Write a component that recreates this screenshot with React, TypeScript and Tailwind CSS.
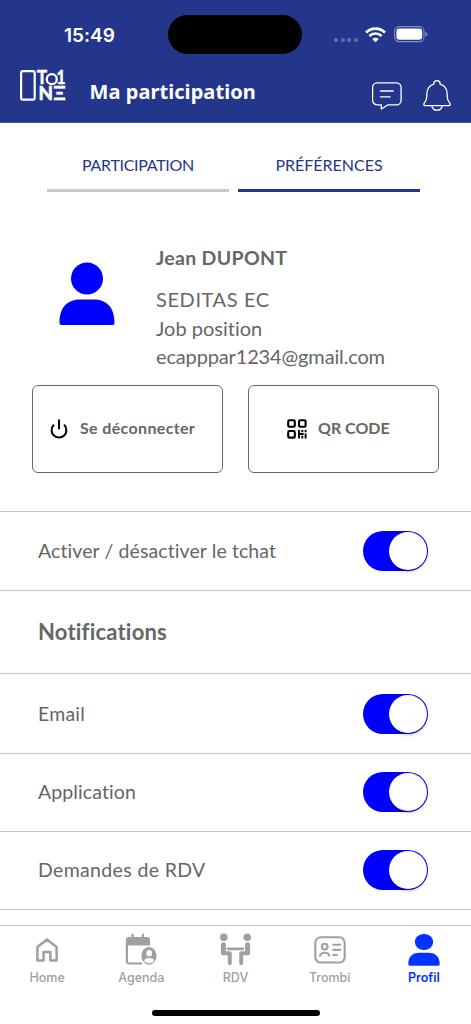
import { useState } from 'react';
import type { ReactNode } from 'react';

function Logo() {
  return (
    <svg width="54" height="48" viewBox="0 -8 54 48" fill="none" stroke="white">
      <rect x="1.1" y="1.1" width="13.6" height="28.6" rx="2" strokeWidth="2.2" />
      <g fill="white" stroke="white" strokeWidth="0.6" fontFamily="Lato, sans-serif" fontWeight="700">
        <text x="17" y="14.2" fontSize="18.5" textLength="10" lengthAdjust="spacingAndGlyphs">T</text>
        <text x="36.6" y="14.2" fontSize="18.5" textLength="9" lengthAdjust="spacingAndGlyphs">1</text>
        <text x="18.6" y="30.2" fontSize="18" textLength="14.5" lengthAdjust="spacingAndGlyphs">N</text>
        <text x="33.6" y="30.2" fontSize="18" textLength="12" lengthAdjust="spacingAndGlyphs">Ξ</text>
      </g>
      <circle cx="31.8" cy="9.2" r="5" strokeWidth="2.3" />
    </svg>
  );
}

function WifiIcon() {
  return (
    <svg width="21" height="16" viewBox="0 0 21 16" fill="none" stroke="white" strokeWidth="2.7">
      <path d="M1 5.5a13.5 13.5 0 0 1 19 0" />
      <path d="M4.4 9a8.7 8.7 0 0 1 12.2 0" />
      <path d="M10.5 15.2 7.3 12a4.6 4.6 0 0 1 6.4 0z" fill="white" stroke="none" />
    </svg>
  );
}

function BatteryIcon() {
  return (
    <svg width="34" height="17" viewBox="0 0 34 17" fill="none">
      <rect x="0.6" y="0.6" width="29.4" height="15" rx="4.6" stroke="#8792c2" strokeWidth="1.1" />
      <rect x="2.4" y="2.4" width="25.8" height="11.4" rx="3.2" fill="white" />
      <path d="M31.5 5.8q1.7.8 1.7 2.4t-1.7 2.4z" fill="#8792c2" />
    </svg>
  );
}

function MessageIcon() {
  return (
    <svg width="30" height="28" viewBox="0 0 30 28" fill="none" stroke="white" strokeWidth="1.3" strokeLinecap="round" strokeLinejoin="round">
      <path d="M5.2.8h19.3a4.6 4.6 0 0 1 4.6 4.6v12.8a4.6 4.6 0 0 1-4.6 4.6H16.2L9.3 27v-4.2H5.2a4.6 4.6 0 0 1-4.6-4.6V5.4A4.6 4.6 0 0 1 5.2.8z" />
      <path d="M8.4 9h12.8M8.4 14.8h9.8" />
    </svg>
  );
}

function BellIcon() {
  return (
    <svg width="28" height="32" viewBox="0 0 28 32" fill="none" stroke="white" strokeWidth="1.3" strokeLinejoin="round">
      <path d="M10.9 4.1V3.8a3.1 3.1 0 0 1 6.2 0v.3c4.6 1.5 7 5 7 9.6 0 4.5.4 6.5 2 8.4 1.7 2 1.6 3.5-.7 3.5H2.6c-2.3 0-2.4-1.5-.7-3.5 1.6-1.9 2-3.9 2-8.4 0-4.6 2.4-8.1 7-9.6z" />
      <path d="M8.9 25.8c.5 2.8 2.4 4.4 5.1 4.4s4.6-1.6 5.1-4.4" />
    </svg>
  );
}

function PersonIcon() {
  return (
    <svg width="56" height="64" viewBox="0 0 56 64" fill="#0000ff">
      <circle cx="28" cy="16.5" r="16" />
      <path d="M0.5 61c0-16 8-23.5 21-23.5h13c13 0 21 7.5 21 23.5a1.9 1.9 0 0 1-1.9 1.9H2.4A1.9 1.9 0 0 1 .5 61z" />
    </svg>
  );
}

function PowerIcon() {
  return (
    <svg width="18" height="20" viewBox="0 0 18 20" fill="none" stroke="black" strokeWidth="2" strokeLinecap="round">
      <path d="M9 1.2v8.3M3.5 6.2A7.4 7.4 0 1 0 14.5 6.2" />
    </svg>
  );
}

function QrIcon() {
  return (
    <svg width="20" height="20" viewBox="0 0 20 20" fill="none" stroke="black" strokeWidth="2.1">
      <rect x="1.2" y="1.2" width="6.6" height="6.6" rx="1.2" />
      <rect x="12" y="1.2" width="6.6" height="6.6" rx="1.2" />
      <rect x="1.2" y="12" width="6.6" height="6.6" rx="1.2" />
      <path d="M12 11v8.6M18.6 11v2.3M18.6 14.5v5.1M15.3 11v2.2M15.3 16.8v2.8M13 15h3.6" strokeWidth="1.9" />
    </svg>
  );
}

function HomeIcon() {
  return (
    <svg width="22" height="24" viewBox="0 0 22 24" fill="none" stroke="#a0a0a0" strokeWidth="2.5" strokeLinejoin="round">
      <path d="M1.4 8.9 11 1.6l9.6 7.3v13.5h-6.2V14H7.6v8.4H1.4z" />
    </svg>
  );
}

function AgendaIcon() {
  return (
    <svg width="32" height="33" viewBox="0 0 32 33" fill="#a0a0a0">
      <path d="M4 4h18a3 3 0 0 1 3 3v5.5H.8V7A3 3 0 0 1 4 4z" />
      <path d="M7.5.8v5M18 .8v5" stroke="#a0a0a0" strokeWidth="2.3" />
      <path d="M1.9 11v17a2.5 2.5 0 0 0 2.5 2.5H17" fill="none" stroke="#a0a0a0" strokeWidth="2.2" />
      <ellipse cx="24" cy="22.8" rx="8.5" ry="9.7" fill="white" />
      <ellipse cx="24" cy="22.8" rx="7.6" ry="8.9" />
      <ellipse cx="24.2" cy="20.2" rx="2.8" ry="3.2" fill="white" />
      <path d="M19.2 28.3c.2-2.2 2-3.3 4.9-3.3s4.7 1.1 4.9 3.3c-3 2.5-6.8 2.5-9.8 0z" fill="white" />
    </svg>
  );
}

function MeetingIcon() {
  return (
    <svg width="32" height="33" viewBox="1 0 32 33" fill="none" stroke="#a0a0a0" strokeLinecap="round" strokeLinejoin="round">
      <g fill="#a0a0a0" stroke="none">
        <circle cx="4.8" cy="4.2" r="3.8" />
        <circle cx="28.2" cy="4.2" r="3.8" />
      </g>
      <path d="M4.4 11.8v8M28.6 11.8v8" strokeWidth="5" />
      <path d="M4.4 20.3h6.400v10M28.600 20.300h-6.400v10" strokeWidth="3.900" />
      <path d="M9 15.8h15" strokeWidth="2.800" />
    </svg>
  );
}

function BadgeIcon() {
  return (
    <svg width="32" height="28" viewBox="0 0 32 28" fill="none" stroke="#a0a0a0" strokeWidth="2.1" strokeLinecap="round">
      <rect x="1.3" y="1.3" width="29.4" height="25.2" rx="5.5" />
      <circle cx="10.7" cy="10.6" r="2.9" />
      <path d="M6 19.7c.8-4 8.6-4 9.4 0M19.2 8.8h7M19.2 13.9h7M19.2 19h3.6" />
    </svg>
  );
}

function ProfileIcon() {
  return (
    <svg width="32" height="32" viewBox="0 0 32 32" fill="#0433ff">
      <ellipse cx="16" cy="8" rx="9.2" ry="8" />
      <path d="M.3 30.3c0-7.5 4-11.5 11-11.5h9.400c7 0 11 4 11 11.500a1.400 1.400 0 0 1-1.400 1.400H1.700a1.400 1.400 0 0 1-1.400-1.400z" />
    </svg>
  );
}

function SettingRow({ label, className }: { label: string; className: string }) {
  const [enabled, setEnabled] = useState(true);

  return (
    <div className={`flex shrink-0 items-center justify-between border-t border-[#c8c8c8] pr-[43px] pl-[38px] ${className}`}>
      <span className="text-[19.5px]">{label}</span>
      <button
        role="switch"
        aria-checked={enabled}
        aria-label={label}
        onClick={() => setEnabled(!enabled)}
        className={`flex h-10 w-[65px] items-center rounded-full p-px tracking-normal ${enabled ? 'justify-end bg-[#0000ff]' : 'justify-start bg-gray-300'}`}
      >
        <span className="size-[38px] rounded-full bg-white shadow-[0_2px_3px_rgba(0,0,0,0.25)]" />
      </button>
    </div>
  );
}

function NavItem({ label, icon, active = false }: { label: string; icon: ReactNode; active?: boolean }) {
  return (
    <a className={`flex flex-1 flex-col items-center font-['Inter',sans-serif] text-[12.5px] ${active ? 'font-semibold text-[#0433ff]' : 'font-medium text-[#a0a0a0]'}`}>
      <span className="flex h-[33px] items-center">{icon}</span>
      <span className="mt-1 leading-4">{label}</span>
    </a>
  );
}

export default function App() {
  return (
    <div className="flex h-[1024px] w-[471px] flex-col overflow-hidden bg-white font-['Lato',sans-serif] text-[#666] [font-variant-ligatures:none]">
      <header className="flex h-[123px] shrink-0 flex-col border-b border-[#4a589f] bg-[#24368b] text-white">
        <div className="flex h-[54px] shrink-0 pt-[15px]">
          <div className="w-[168px] pt-[7px] pl-16 font-['Inter',sans-serif] text-[19px] leading-7 font-semibold">15:49</div>
          <div className="h-[39px] w-[134px] rounded-full bg-black" />
          <div className="flex h-[39px] flex-1 items-center pl-8">
            <div className="mt-[10px] mr-[7px] flex gap-[2.5px]">
              {[0, 1, 2, 3].map((dot) => (
                <span key={dot} className="size-1 rounded-[1.5px] bg-[#5d6aab]" />
              ))}
            </div>
            <WifiIcon />
            <span className="ml-2"><BatteryIcon /></span>
          </div>
        </div>
        <div className="flex flex-1 items-start pl-5">
          <div className="pt-[8px]"><Logo /></div>
          <h1 className="ml-[15.5px] pt-[24px] font-['Noto_Sans',sans-serif] text-[20px] leading-7 font-bold tracking-[0.06px]">Ma participation</h1>
          <div className="ml-auto flex pt-[25.5px] pr-5">
            <span className="pt-0.5"><MessageIcon /></span>
            <span className="ml-[21px]"><BellIcon /></span>
          </div>
        </div>
      </header>

      <nav className="flex shrink-0 gap-[9px] pl-[47px] text-center text-[16px] leading-6 text-[#24368b]">
        <div className="h-[69px] w-[182px] border-b-[3px] border-[#c9c9c9] pt-[30px] tracking-[-0.3px]">PARTICIPATION</div>
        <div className="h-[69px] w-[182px] border-b-[3px] border-[#24368b] pt-[30px]">PRÉFÉRENCES</div>
      </nav>

      <section className="flex h-[193px] shrink-0 pl-[59px]">
        <div className="pt-[70px]"><PersonIcon /></div>
        <div className="ml-[41px] pt-[52px] text-[20px] leading-7 whitespace-nowrap">
          <p className="text-[19.5px] font-bold tracking-[0.3px]">Jean DUPONT</p>
          <p className="mt-[13px] tracking-[0.6px]">SEDITAS EC</p>
          <p className="mt-px">Job position</p>
          <p className="tracking-[-0.15px]">ecapppar1234@gmail.com</p>
        </div>
      </section>

      <div className="flex h-[126px] shrink-0 gap-[25px] pl-8 text-[16px] font-bold">
        <button className="flex h-[88px] w-[191px] items-center rounded-[6px] border border-[#666] pl-[17px]">
          <PowerIcon />
          <span className="mb-0.5 ml-3 tracking-[0.35px]">Se déconnecter</span>
        </button>
        <button className="flex h-[88px] w-[191px] items-center rounded-[6px] border border-[#666] pl-[38px]">
          <QrIcon />
          <span className="mb-0.5 ml-[11px]">QR CODE</span>
        </button>
      </div>

      <SettingRow label="Activer / désactiver le tchat" className="h-[79px] tracking-[0.1px]" />
      <h2 className="flex h-[83px] shrink-0 items-center border-t border-[#c8c8c8] pb-0.5 pl-[38px] text-[22px] font-bold tracking-[0.2px]">Notifications</h2>
      <SettingRow label="Email" className="h-[80px] tracking-[0.2px]" />
      <SettingRow label="Application" className="h-[78px] pb-0.5 tracking-[0.1px]" />
      <SettingRow label="Demandes de RDV" className="h-[78px] pb-0.5 tracking-[0.35px]" />
      <div className="h-4 shrink-0 border-t border-[#c8c8c8]" />

      <footer className="flex h-[99px] shrink-0 flex-col border-t border-[#c8c8c8]">
        <div className="flex h-[84px] pt-[7px]">
          <NavItem label="Home" icon={<HomeIcon />} />
          <NavItem label="Agenda" icon={<AgendaIcon />} />
          <NavItem label="RDV" icon={<MeetingIcon />} />
          <NavItem label="Trombi" icon={<BadgeIcon />} />
          <NavItem label="Profil" icon={<ProfileIcon />} active />
        </div>
        <div className="mx-auto h-[6px] w-[168px] rounded-full bg-black" />
      </footer>
    </div>
  );
}
